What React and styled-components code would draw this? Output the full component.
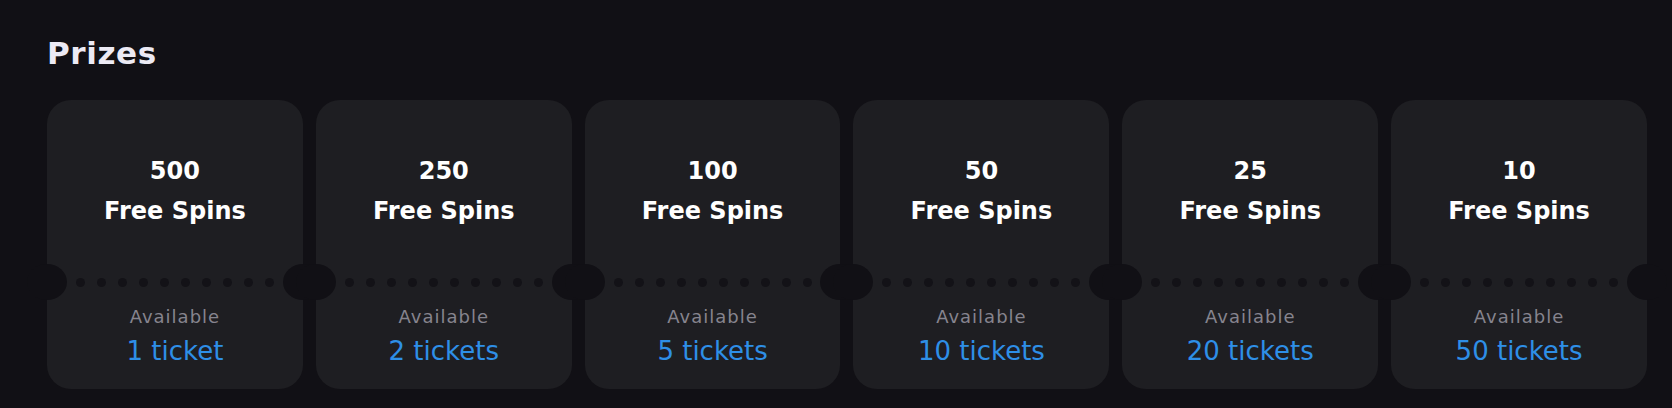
import React from "react";
import styled, { createGlobalStyle } from "styled-components";

const Global = createGlobalStyle`
  html, body {
    margin: 0;
    padding: 0;
    background: #111015;
  }
  body {
    font-family: "DejaVu Sans", "Liberation Sans", sans-serif;
    -webkit-font-smoothing: antialiased;
  }
`;

const Page = styled.section`
  box-sizing: border-box;
  width: 1672px;
  height: 408px;
  padding: 36px 25px 0 47px;
  background: #111015;
`;

const Title = styled.h2`
  margin: 0 0 29px;
  font-size: 31px;
  line-height: 35px;
  letter-spacing: 0.6px;
  font-weight: 700;
  color: #eceaf4;
`;

const Grid = styled.div`
  display: grid;
  grid-template-columns: repeat(6, 1fr);
  gap: 13px;
`;

const Card = styled.article`
  position: relative;
  height: 289px;
  border-radius: 24px;
  background: #1e1e22;
  display: flex;
  flex-direction: column;
  text-align: center;

  &::before,
  &::after {
    content: "";
    position: absolute;
    top: 164px;
    width: 40px;
    height: 36px;
    border-radius: 50%;
    background: #111015;
  }
  &::before {
    left: -20px;
  }
  &::after {
    right: -20px;
  }
`;

const Top = styled.div`
  box-sizing: border-box;
  height: 178px;
  padding-top: 51px;
  color: #ffffff;
  font-size: 24px;
  line-height: 40px;
  font-weight: 700;
`;

const Line = styled.div``;

const Dots = styled.div`
  height: 8px;
  display: flex;
  justify-content: center;
  align-items: center;
  gap: 12px;
`;

const Dot = styled.span`
  flex: none;
  width: 9px;
  height: 9px;
  border-radius: 50%;
  background: #131217;
`;

const Bottom = styled.div`
  padding-top: 19px;
  display: flex;
  flex-direction: column;
  align-items: center;
  gap: 5px;
`;

const Label = styled.div`
  font-size: 18px;
  line-height: 24px;
  letter-spacing: 1px;
  color: #86848e;
`;

const Tickets = styled.div`
  font-size: 26px;
  line-height: 34px;
  color: #2e8fe7;
`;

const prizes = [
  { spins: 500, tickets: "1 ticket" },
  { spins: 250, tickets: "2 tickets" },
  { spins: 100, tickets: "5 tickets" },
  { spins: 50, tickets: "10 tickets" },
  { spins: 25, tickets: "20 tickets" },
  { spins: 10, tickets: "50 tickets" },
];

export default function App() {
  return (
    <>
      <Global />
      <Page>
        <Title>Prizes</Title>
        <Grid>
          {prizes.map((p) => (
            <Card key={p.spins}>
              <Top>
                <Line>{p.spins}</Line>
                <Line>Free Spins</Line>
              </Top>
              <Dots>
                {Array.from({ length: 10 }).map((_, i) => (
                  <Dot key={i} />
                ))}
              </Dots>
              <Bottom>
                <Label>Available</Label>
                <Tickets>{p.tickets}</Tickets>
              </Bottom>
            </Card>
          ))}
        </Grid>
      </Page>
    </>
  );
}
